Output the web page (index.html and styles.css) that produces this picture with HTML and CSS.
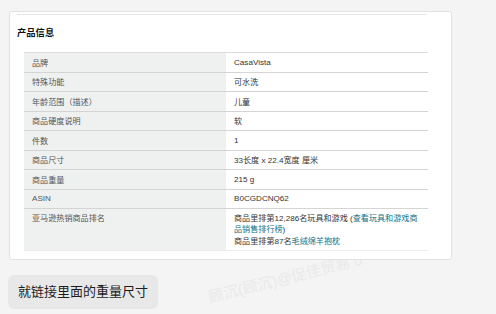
FILE: index.html
```html
<!DOCTYPE html>
<html lang="zh-CN">
<head>
  <meta charset="UTF-8" />
  <title>产品信息</title>
  <link rel="stylesheet" href="styles.css">
</head>
<body>
  <!-- 背景水印 -->
  <div class="watermark">顾沉(顾沉)@促佳贸易 0</div>

  <div class="message-card">
    <div class="sheet">
      <h2 class="sheet-title">产品信息</h2>
      <table class="detail-table">
        <tr><th>品牌</th><td>CasaVista</td></tr>
        <tr><th>特殊功能</th><td>可水洗</td></tr>
        <tr><th>年龄范围（描述）</th><td>儿童</td></tr>
        <tr><th>商品硬度说明</th><td>软</td></tr>
        <tr><th>件数</th><td>1</td></tr>
        <tr><th>商品尺寸</th><td>33长度 x 22.4宽度 厘米</td></tr>
        <tr><th>商品重量</th><td>215 g</td></tr>
        <tr><th>ASIN</th><td>B0CGDCNQ62</td></tr>
        <tr class="rank-row">
          <th>亚马逊热销商品排名</th>
          <td>
            商品里排第12,286名玩具和游戏 (<a href="#">查看玩具和游戏商品销售排行榜</a>)<br>
            商品里排第87名<a href="#">毛绒绵羊抱枕</a>
          </td>
        </tr>
      </table>
    </div>
  </div>

  <div class="reply-bubble">就链接里面的重量尺寸</div>
</body>
</html>
```

FILE: styles.css
```css
* { box-sizing: border-box; }
body {
  margin: 0;
  padding: 11px 8px 0 8px;
  background-color: #f4f4f4;
  font-family: "Liberation Sans", "Noto Sans CJK SC", sans-serif;
  color: #222;
  position: relative;
  overflow: hidden;
  height: 314px;
}
.watermark {
  position: absolute;
  left: 206px;
  top: 286px;
  font-size: 15px;
  color: #e9e9e9;
  white-space: nowrap;
  transform: rotate(-14deg);
  transform-origin: left top;
  z-index: 0;
}
.message-card {
  position: relative;
  z-index: 1;
  width: 443px;
  margin-left: 1px;
  background: #fff;
  border: 1px solid #e2e2e2;
  border-radius: 3px;
  padding: 2px 24px 8px 7px;
}
.sheet {
  border-top: 1px solid #e6e6e6;
}
.sheet-title {
  margin: 0;
  padding: 10px 0 0 0;
  height: 37px;
  font-size: 9.3px;
  font-weight: bold;
  color: #111;
}
.detail-table {
  margin-left: 7px;
  width: 404px;
  border-collapse: collapse;
  font-size: 8.1px;
  border-top: 1px solid #dcdcdc;
}
.detail-table tr {
  border-bottom: 1px solid #d4d4d4;
}
.detail-table th,
.detail-table td {
  height: 19.5px;
  padding: 0 8px;
  text-align: left;
  vertical-align: middle;
  font-weight: normal;
}
.detail-table th {
  width: 202px;
  background: #eff1f1;
  color: #555;
}
.detail-table td {
  color: #333;
}
.rank-row {
  border-bottom-color: #ececec !important;
}
.rank-row th,
.rank-row td {
  vertical-align: top;
  padding-top: 4px;
  padding-bottom: 2px;
  line-height: 11.3px;
  height: 42px;
}
.detail-table a {
  color: #0f7185;
  text-decoration: none;
}
.reply-bubble {
  position: relative;
  z-index: 1;
  display: inline-block;
  margin-top: 15px;
  padding: 8px 10px;
  background: #e8e8e8;
  border-radius: 6px;
  font-size: 13px;
  line-height: 18px;
  color: #1d1d1d;
}
```
